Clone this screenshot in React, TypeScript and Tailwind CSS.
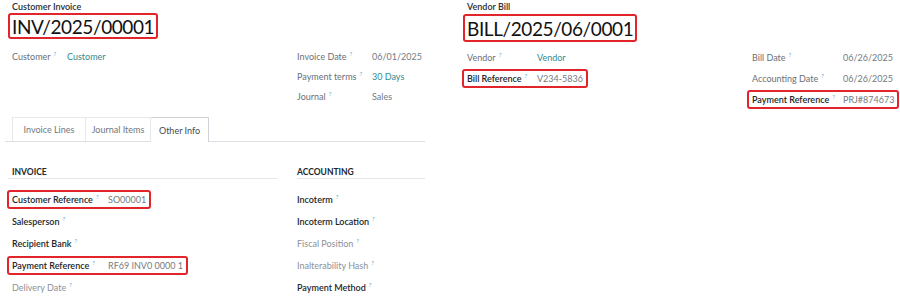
import * as React from "react"

type Tone = "dark" | "gray" | "light"

const labelTone: Record<Tone, string> = {
  dark: "text-[#22262a] font-semibold",
  gray: "text-[#6b7078]",
  light: "text-[#8c9097]",
}

function Q() {
  return <sup className="ml-[3px] text-[6px] font-normal text-[#58a6cf] -top-[4px]">?</sup>
}

interface FieldProps {
  label: string
  value?: string
  tone?: Tone
  link?: boolean
  boxed?: boolean
  labelW: string
  h: string
}

function Field({ label, value, tone = "gray", link, boxed, labelW, h }: FieldProps) {
  const inner = (
    <>
      <span className={`${labelW} shrink-0 ${labelTone[tone]}`}>
        {label}
        <Q />
      </span>
      {value && (
        <span className={link ? "text-[#2f8a92]" : "text-[#757a81]"}>{value}</span>
      )}
    </>
  )
  return (
    <div className={`flex items-center ${h}`}>
      {boxed ? (
        <span className="inline-flex items-center h-[19px] -ml-[5px] pl-[3px] pr-[3px] border-2 border-[#e1252b] rounded-[3px]">
          {inner}
        </span>
      ) : (
        inner
      )}
    </div>
  )
}

function Title({ text, h }: { text: string; h: string }) {
  return (
    <div
      className={`inline-flex items-center ${h} -ml-[4px] px-[2px] border-2 border-[#e1252b] rounded-[3px] text-[19px] leading-none text-[#111] tracking-[-0.4px]`}
    >
      {text}
    </div>
  )
}

function InvoicePanel() {
  return (
    <div className="w-[425px] shrink-0">
      <div className="pl-[12px] h-[12px] flex items-center text-[9px] font-semibold text-[#2a2e33]">
        Customer Invoice
      </div>
      <div className="pl-[12px] mt-[1px]">
        <Title text="INV/2025/00001" h="h-[26px]" />
      </div>

      <div className="flex mt-[7px] pl-[12px]">
        <div className="w-[285px]">
          <Field label="Customer" value="Customer" link labelW="w-[55px]" h="h-[20px]" />
        </div>
        <div>
          <Field label="Invoice Date" value="06/01/2025" labelW="w-[75px]" h="h-[20px]" />
          <Field label="Payment terms" value="30 Days" link labelW="w-[75px]" h="h-[20px]" />
          <Field label="Journal" value="Sales" labelW="w-[75px]" h="h-[20px]" />
        </div>
      </div>

      {/* Tabs */}
      <div className="mt-[11px] ml-[5px] flex items-end h-[25px] border-b border-[#dcdfe3]">
        <div className="ml-[7px] w-[74px] h-[24px] flex items-center justify-center border border-b-0 border-[#e6e8eb] text-[#72777e]">
          Invoice Lines
        </div>
        <div className="w-[65px] h-[24px] flex items-center justify-center border border-b-0 border-l-0 border-[#e6e8eb] text-[#72777e]">
          Journal Items
        </div>
        <div className="w-[58px] h-[25px] -mb-px flex items-center justify-center border border-b-0 border-l-0 border-[#cfd3d8] bg-white text-[#444a50]">
          Other Info
        </div>
      </div>

      <div className="flex mt-[24px]">
        <div className="w-[277px] pl-[8px]">
          <div className="h-[13px] flex items-center pl-[4px] border-b border-[#e3e5e8] text-[8.5px] font-bold text-[#22262a]">
            INVOICE
          </div>
          <div className="mt-[9px] pl-[4px]">
            <Field label="Customer Reference" value="SO00001" tone="dark" boxed labelW="w-[96px]" h="h-[22px]" />
            <Field label="Salesperson" tone="dark" labelW="w-[96px]" h="h-[22px]" />
            <Field label="Recipient Bank" tone="dark" labelW="w-[96px]" h="h-[22px]" />
            <Field label="Payment Reference" value="RF69 INV0 0000 1" tone="dark" boxed labelW="w-[96px]" h="h-[22px]" />
            <Field label="Delivery Date" tone="light" labelW="w-[96px]" h="h-[22px]" />
          </div>
        </div>
        <div className="ml-[20px] flex-1">
          <div className="h-[13px] flex items-center border-b border-[#e3e5e8] text-[8.5px] font-bold text-[#22262a]">
            ACCOUNTING
          </div>
          <div className="mt-[9px]">
            <Field label="Incoterm" tone="dark" labelW="" h="h-[22px]" />
            <Field label="Incoterm Location" tone="dark" labelW="" h="h-[22px]" />
            <Field label="Fiscal Position" tone="light" labelW="" h="h-[22px]" />
            <Field label="Inalterability Hash" tone="light" labelW="" h="h-[22px]" />
            <Field label="Payment Method" tone="dark" labelW="" h="h-[22px]" />
          </div>
        </div>
      </div>
    </div>
  )
}

function BillPanel() {
  return (
    <div className="ml-[37px] flex-1">
      <div className="pl-[5px] h-[13px] flex items-center text-[9px] font-semibold text-[#2a2e33]">
        Vendor Bill
      </div>
      <div className="pl-[5px] mt-[1px]">
        <Title text="BILL/2025/06/0001" h="h-[28px]" />
      </div>
      <div className="flex mt-[5px] pl-[5px]">
        <div className="w-[285px]">
          <Field label="Vendor" value="Vendor" link labelW="w-[70px]" h="h-[21px]" />
          <Field label="Bill Reference" value="V234-5836" tone="dark" boxed labelW="w-[70px]" h="h-[21px]" />
        </div>
        <div>
          <Field label="Bill Date" value="06/26/2025" labelW="w-[91px]" h="h-[21px]" />
          <Field label="Accounting Date" value="06/26/2025" labelW="w-[91px]" h="h-[21px]" />
          <Field label="Payment Reference" value="PRJ#874673" tone="dark" boxed labelW="w-[91px]" h="h-[21px]" />
        </div>
      </div>
    </div>
  )
}

export default function App() {
  return (
    <div
      className="w-[900px] h-[305px] overflow-hidden bg-white flex text-[9px] leading-none"
      style={{ fontFamily: "Lato, 'Open Sans', sans-serif" }}
    >
      <InvoicePanel />
      <BillPanel />
    </div>
  )
}
